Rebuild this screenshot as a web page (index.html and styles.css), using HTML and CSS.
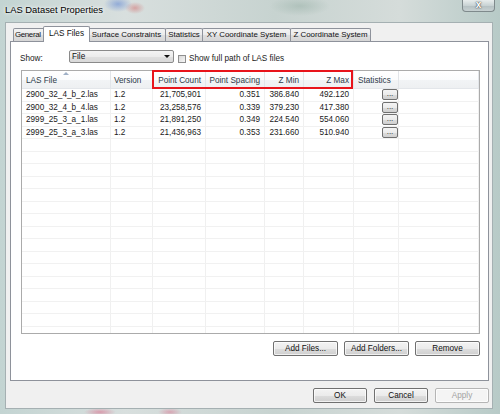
FILE: index.html
```html
<!DOCTYPE html>
<html>
<head>
<meta charset="utf-8">
<title>LAS Dataset Properties</title>
<link rel="stylesheet" href="styles.css">
</head>
<body>
<div class="window">
  <div class="titlebar">
    <div class="title">LAS Dataset Properties</div>
    <div class="close">x</div>
  </div>
  <div class="client">
    <div class="tabs">
      <div class="tab t-general">General</div>
      <div class="tab t-las selected">LAS Files</div>
      <div class="tab t-surface">Surface Constraints</div>
      <div class="tab t-stats">Statistics</div>
      <div class="tab t-xy">XY Coordinate System</div>
      <div class="tab t-z">Z Coordinate System</div>
    </div>
    <div class="panel">
      <div class="show-row">
        <span class="show-label">Show:</span>
        <div class="combo"><span>File</span><span class="combo-arrow"></span></div>
        <span class="checkbox"></span>
        <span class="check-label">Show full path of LAS files</span>
      </div>
      <div class="table">
        <div class="row header">
          <div class="cell left sorted">LAS File</div>
          <div class="cell left">Version</div>
          <div class="cell right">Point Count</div>
          <div class="cell right">Point Spacing</div>
          <div class="cell right">Z Min</div>
          <div class="cell right">Z Max</div>
          <div class="cell left">Statistics</div>
          <div class="cell"></div>
        </div>
        <div class="body">
          <div class="row">
            <div class="cell left">2900_32_4_b_2.las</div><div class="cell left">1.2</div><div class="cell right">21,705,901</div><div class="cell right">0.351</div><div class="cell right">386.840</div><div class="cell right">492.120</div><div class="cell btn-cell"><span class="mini-btn">...</span></div><div class="cell"></div>
          </div>
          <div class="row">
            <div class="cell left">2900_32_4_b_4.las</div><div class="cell left">1.2</div><div class="cell right">23,258,576</div><div class="cell right">0.339</div><div class="cell right">379.230</div><div class="cell right">417.380</div><div class="cell btn-cell"><span class="mini-btn">...</span></div><div class="cell"></div>
          </div>
          <div class="row">
            <div class="cell left">2999_25_3_a_1.las</div><div class="cell left">1.2</div><div class="cell right">21,891,250</div><div class="cell right">0.349</div><div class="cell right">224.540</div><div class="cell right">554.060</div><div class="cell btn-cell"><span class="mini-btn">...</span></div><div class="cell"></div>
          </div>
          <div class="row">
            <div class="cell left">2999_25_3_a_3.las</div><div class="cell left">1.2</div><div class="cell right">21,436,963</div><div class="cell right">0.353</div><div class="cell right">231.660</div><div class="cell right">510.940</div><div class="cell btn-cell"><span class="mini-btn">...</span></div><div class="cell"></div>
          </div>
          <div class="row"><div class="cell"></div><div class="cell"></div><div class="cell"></div><div class="cell"></div><div class="cell"></div><div class="cell"></div><div class="cell"></div><div class="cell"></div></div>
          <div class="row"><div class="cell"></div><div class="cell"></div><div class="cell"></div><div class="cell"></div><div class="cell"></div><div class="cell"></div><div class="cell"></div><div class="cell"></div></div>
          <div class="row"><div class="cell"></div><div class="cell"></div><div class="cell"></div><div class="cell"></div><div class="cell"></div><div class="cell"></div><div class="cell"></div><div class="cell"></div></div>
          <div class="row"><div class="cell"></div><div class="cell"></div><div class="cell"></div><div class="cell"></div><div class="cell"></div><div class="cell"></div><div class="cell"></div><div class="cell"></div></div>
          <div class="row"><div class="cell"></div><div class="cell"></div><div class="cell"></div><div class="cell"></div><div class="cell"></div><div class="cell"></div><div class="cell"></div><div class="cell"></div></div>
          <div class="row"><div class="cell"></div><div class="cell"></div><div class="cell"></div><div class="cell"></div><div class="cell"></div><div class="cell"></div><div class="cell"></div><div class="cell"></div></div>
          <div class="row"><div class="cell"></div><div class="cell"></div><div class="cell"></div><div class="cell"></div><div class="cell"></div><div class="cell"></div><div class="cell"></div><div class="cell"></div></div>
          <div class="row"><div class="cell"></div><div class="cell"></div><div class="cell"></div><div class="cell"></div><div class="cell"></div><div class="cell"></div><div class="cell"></div><div class="cell"></div></div>
          <div class="row"><div class="cell"></div><div class="cell"></div><div class="cell"></div><div class="cell"></div><div class="cell"></div><div class="cell"></div><div class="cell"></div><div class="cell"></div></div>
          <div class="row"><div class="cell"></div><div class="cell"></div><div class="cell"></div><div class="cell"></div><div class="cell"></div><div class="cell"></div><div class="cell"></div><div class="cell"></div></div>
          <div class="row"><div class="cell"></div><div class="cell"></div><div class="cell"></div><div class="cell"></div><div class="cell"></div><div class="cell"></div><div class="cell"></div><div class="cell"></div></div>
          <div class="row"><div class="cell"></div><div class="cell"></div><div class="cell"></div><div class="cell"></div><div class="cell"></div><div class="cell"></div><div class="cell"></div><div class="cell"></div></div>
          <div class="row"><div class="cell"></div><div class="cell"></div><div class="cell"></div><div class="cell"></div><div class="cell"></div><div class="cell"></div><div class="cell"></div><div class="cell"></div></div>
          <div class="row"><div class="cell"></div><div class="cell"></div><div class="cell"></div><div class="cell"></div><div class="cell"></div><div class="cell"></div><div class="cell"></div><div class="cell"></div></div>
          <div class="row"><div class="cell"></div><div class="cell"></div><div class="cell"></div><div class="cell"></div><div class="cell"></div><div class="cell"></div><div class="cell"></div><div class="cell"></div></div>
          <div class="row"><div class="cell"></div><div class="cell"></div><div class="cell"></div><div class="cell"></div><div class="cell"></div><div class="cell"></div><div class="cell"></div><div class="cell"></div></div>
        </div>
        <div class="highlight"></div>
      </div>
      <div class="panel-buttons">
        <span class="btn">Add Files...</span>
        <span class="btn">Add Folders...</span>
        <span class="btn">Remove</span>
      </div>
    </div>
    <div class="dialog-buttons">
      <span class="btn">OK</span>
      <span class="btn">Cancel</span>
      <span class="btn disabled">Apply</span>
    </div>
  </div>
</div>
</body>
</html>
```
FILE: styles.css
```css
html, body {
  margin: 0;
  padding: 0;
}
body {
  width: 500px;
  height: 414px;
  overflow: hidden;
  font-family: "Liberation Sans", Arial, sans-serif;
  font-size: 8.2px;
  color: #1a1a1a;
}
.window {
  width: 500px;
  height: 414px;
  display: flex;
  flex-direction: column;
  background:
    radial-gradient(ellipse 14px 8px at 118px 4px, rgba(90,130,210,0.55), transparent),
    radial-gradient(ellipse 10px 6px at 135px 8px, rgba(210,90,90,0.45), transparent),
    radial-gradient(ellipse 30px 10px at 300px 6px, rgba(150,175,165,0.5), transparent),
    radial-gradient(ellipse 16px 4px at 100px 412px, rgba(220,110,140,0.6), transparent),
    radial-gradient(ellipse 12px 4px at 170px 412px, rgba(220,110,140,0.5), transparent),
    linear-gradient(90deg, #c3d4d2 0%, #d8dfde 25%, #c7d3d0 55%, #d5dcda 80%, #b7cac7 100%);
}
.titlebar {
  height: 22px;
  display: flex;
  justify-content: space-between;
  align-items: flex-start;
}
.title {
  margin: 4px 0 0 5px;
  font-size: 9.4px;
  line-height: 11px;
  color: #000;
  text-shadow: 0 0 5px #fff, 0 0 3px #fff;
}
.close {
  width: 31px;
  height: 11px;
  margin-right: 5px;
  border: 1px solid #7f8a8c;
  border-top: none;
  border-radius: 0 0 4px 4px;
  background: linear-gradient(#e8eded, #c9d3d4 50%, #b4c0c2 51%, #c7d1d2);
  color: #fff;
  font-weight: bold;
  font-size: 10px;
  line-height: 9px;
  text-align: center;
  text-shadow: 0 0 1px #333, 0 0 2px #555;
}
.client {
  flex: 1;
  margin: 0 7px 5px 5px;
  border: 1px solid #a5b0b2;
  background: #f0f0f0;
  display: flex;
  flex-direction: column;
  padding: 3px 3px 5px 4px;
}
.tabs {
  display: flex;
  align-items: flex-end;
  height: 16px;
  padding-left: 3px;
  margin-bottom: -1px;
  position: relative;
  z-index: 2;
}
.tab {
  box-sizing: border-box;
  height: 13px;
  margin-bottom: 1px;
  margin-right: -1px;
  border: 1px solid #8e929b;
  border-bottom: none;
  border-radius: 2px 2px 0 0;
  background: linear-gradient(#f3f3f3, #ebebeb 50%, #dedede 51%, #d6d6d6);
  text-align: center;
  line-height: 12px;
  white-space: nowrap;
  color: #111;
  font-size: 7.9px;
}
.t-general { width: 33px; text-align: left; padding-left: 1px; letter-spacing: -0.35px; }
.t-surface { width: 79px; }
.t-stats { width: 38px; }
.t-xy { width: 89px; }
.t-z { width: 81px; }
.tab.selected {
  width: 47px;
  height: 16px;
  margin-bottom: 0;
  margin-left: -2px;
  margin-right: -3px;
  background: #fff;
  position: relative;
  z-index: 3;
  line-height: 14px;
  font-size: 8.2px;
}
.panel {
  flex: 1;
  background: #fff;
  border: 1px solid #8e929b;
  display: flex;
  flex-direction: column;
  padding: 8px 8px 0 9px;
}
.show-row {
  height: 13px;
  display: flex;
  align-items: center;
}
.show-label {
  width: 49px;
  margin-top: 3px;
}
.combo {
  box-sizing: border-box;
  width: 105px;
  height: 13px;
  margin-left: 0;
  border: 1px solid #8a8a8a;
  border-radius: 2px;
  background: linear-gradient(#f4f4f4, #ececec 50%, #e0e0e0 51%, #d9d9d9);
  display: flex;
  align-items: center;
  justify-content: space-between;
  padding: 0 3px 0 2px;
  color: #111;
}
.combo-arrow {
  width: 0;
  height: 0;
  border-left: 3px solid transparent;
  border-right: 3px solid transparent;
  border-top: 3px solid #111;
}
.checkbox {
  box-sizing: border-box;
  width: 8px;
  height: 8px;
  margin: 4px 3px 0 4px;
  border: 1px solid #8f8f8f;
  background: linear-gradient(135deg, #d8d8d8, #f6f6f6);
}
.check-label {
  margin-top: 3px;
}
.table {
  position: relative;
  box-sizing: border-box;
  width: 459px;
  height: 264px;
  margin: 7px 0 0 1px;
  border: 1px solid #ababab;
  overflow: visible;
}
.body {
  height: 244px;
  overflow: hidden;
}
.row {
  display: grid;
  grid-template-columns: 89px 42px 53px 59px 39px 50px 45px 1fr;
  box-sizing: border-box;
  height: 12.5px;
  border-bottom: 1px solid #f1f1f1;
}
.row.header {
  height: 18px;
  border-bottom: 1px solid #e3e6ea;
  background: linear-gradient(#ffffff, #fbfcfd 50%, #f2f4f6 51%, #eef0f2);
  color: #2d3a48;
}
.cell {
  box-sizing: border-box;
  border-right: 1px solid #f0f0f0;
  white-space: nowrap;
  overflow: hidden;
  display: flex;
  align-items: center;
}
.header .cell {
  border-right: 1px solid #e2e5e9;
  position: relative;
  padding-top: 2px;
}
.cell.left { padding-left: 4px; justify-content: flex-start; }
.row .cell:nth-child(2).left { padding-left: 3px; }
.cell.right { padding-right: 4px; justify-content: flex-end; }
.cell.sorted::before {
  content: "";
  position: absolute;
  top: 1px;
  left: 41px;
  width: 0;
  height: 0;
  border-left: 3px solid transparent;
  border-right: 3px solid transparent;
  border-bottom: 3px solid #9fb0c6;
}
.btn-cell {
  justify-content: flex-end;
  padding-right: 0;
}
.mini-btn {
  box-sizing: border-box;
  width: 16px;
  height: 11px;
  border: 1px solid #707070;
  border-radius: 2px;
  background: linear-gradient(#f4f4f4, #ebebeb 50%, #dcdcdc 51%, #d0d0d0);
  font-size: 8px;
  line-height: 7px;
  text-align: center;
  color: #222;
  overflow: hidden;
}
.highlight {
  position: absolute;
  left: 130px;
  top: -1px;
  width: 201px;
  height: 19px;
  box-sizing: border-box;
  border: 2px solid #e8141b;
  pointer-events: none;
}
.panel-buttons {
  display: flex;
  justify-content: flex-end;
  gap: 6px;
  margin-top: 7px;
  padding-right: 0;
  width: 460px;
}
.btn {
  box-sizing: border-box;
  height: 15px;
  border: 1px solid #707070;
  border-radius: 2px;
  background: linear-gradient(#f3f3f3, #ebebeb 50%, #dddddd 51%, #cfcfcf);
  display: flex;
  align-items: center;
  justify-content: center;
  color: #111;
  box-shadow: inset 0 0 0 1px rgba(255,255,255,0.7);
}
.panel-buttons .btn { width: 65px; }
.dialog-buttons {
  display: flex;
  justify-content: flex-end;
  gap: 7px;
  margin-top: 7px;
  padding-right: 0;
}
.dialog-buttons .btn { width: 54px; }
.btn.disabled {
  color: #a3a3a3;
  border-color: #b5b5b5;
  background: #f4f4f4;
}
```
